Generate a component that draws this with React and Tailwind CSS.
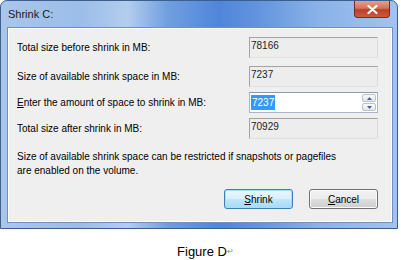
import React from 'react';

const font = { fontFamily: '"Liberation Sans", Arial, sans-serif' };

const ReadOnlyField = ({ value }) => (
  <div className="w-[129px] h-[21px] bg-[#ededed] border border-t-[#a3a3a3] border-l-[#a3a3a3] border-r-[#dadada] border-b-[#e2e2e2] pl-[1px] pt-[2px] text-[10px] leading-[12px] text-[#222]">
    {value}
  </div>
);

const Row = ({ label, children, className = '' }) => (
  <div className={`flex items-center h-[21px] ${className}`}>
    <div className="w-[232px] text-[10px] text-black">{label}</div>
    {children}
  </div>
);

const Arrow = ({ up }) => (
  <svg width="5" height="3" viewBox="0 0 5 3">
    <path d={up ? 'M0 3 L2.5 0 L5 3 Z' : 'M0 0 L2.5 3 L5 0 Z'} fill="#4d6185" />
  </svg>
);

export default function App() {
  return (
    <div className="w-[401px] h-[260px] bg-white relative overflow-hidden" style={font}>
      <div className="w-[398px] h-[229px] rounded-t-[7px] border border-[#3d5f8e] flex flex-col bg-[linear-gradient(90deg,#aac6ea_0%,#9bbde8_20%,#b3cdee_32%,#709fe0_42%,#4f86da_55%,#6394de_65%,#8ab2e8_80%,#a2c3ee_100%)]">
        <div className="h-[26px] flex items-start">
          <div className="pl-[7px] pt-[7px] text-[11px] leading-[12px] text-[#1a1a1a]">Shrink C:</div>
          <div className="ml-auto mr-[7px] w-[36px] h-[17px] rounded-b-[4px] border border-t-0 border-[#7a2a1e] bg-[linear-gradient(180deg,#e3a08e_0%,#d3735b_45%,#bb3f2a_55%,#cc5a40_100%)] flex items-center justify-center">
            <svg width="11" height="9" viewBox="0 0 11 9">
              <path d="M1.5 1 L9.5 8 M9.5 1 L1.5 8" stroke="#fff" strokeWidth="2.2" strokeLinecap="round" />
            </svg>
          </div>
        </div>
        <div className="ml-[6px] mr-[4px] h-[196px] bg-[#efefef] border border-[#6f8fbd] shadow-[inset_1px_1px_0_#fff,inset_-1px_-1px_0_#fff] pl-[9px] pr-[14px] pt-[9px] flex flex-col">
          <Row label="Total size before shrink in MB:">
            <ReadOnlyField value="78166" />
          </Row>
          <Row label="Size of available shrink space in MB:" className="mt-[8px]">
            <ReadOnlyField value="7237" />
          </Row>
          <Row label={<><span className="underline">E</span>nter the amount of space to shrink in MB:</>} className="mt-[5px]">
            <div className="w-[129px] h-[21px] bg-white border border-[#a9b6c6] border-t-[#8e9aab] flex items-center pl-[1px] pr-[1px]">
              <span className="bg-[#3399ff] text-white text-[10px] leading-[15px] px-[1px]">7237</span>
              <div className="ml-auto flex flex-col gap-[1px]">
                <div className="w-[14px] h-[8px] rounded-[2px] border border-[#b9c2cc] bg-[linear-gradient(180deg,#fbfbfb,#e3e6ea)] flex items-center justify-center">
                  <Arrow up />
                </div>
                <div className="w-[14px] h-[8px] rounded-[2px] border border-[#b9c2cc] bg-[linear-gradient(180deg,#fbfbfb,#e3e6ea)] flex items-center justify-center">
                  <Arrow />
                </div>
              </div>
            </div>
          </Row>
          <Row label="Total size after shrink in MB:" className="mt-[5px]">
            <ReadOnlyField value="70929" />
          </Row>
          <div className="mt-[11px] text-[10px] leading-[14px] text-black">
            Size of available shrink space can be restricted if snapshots or pagefiles<br />
            are enabled on the volume.
          </div>
          <div className="mt-[11px] flex justify-end gap-[16px]">
            <div className="w-[69px] h-[20px] rounded-[3px] border border-[#3c7fb1] shadow-[inset_0_0_0_1px_#a6e0f8] bg-[linear-gradient(180deg,#eaf6fd_0%,#d9f0fc_48%,#bee6fd_52%,#a7d9f5_100%)] flex items-center justify-center text-[10px] text-black">
              <span><span className="underline">S</span>hrink</span>
            </div>
            <div className="w-[69px] h-[20px] rounded-[3px] border border-[#707070] shadow-[inset_0_0_0_1px_#fbfbfb] bg-[linear-gradient(180deg,#f2f2f2_0%,#ebebeb_48%,#dddddd_52%,#cfcfcf_100%)] flex items-center justify-center text-[10px] text-black">
              <span><span className="underline">C</span>ancel</span>
            </div>
          </div>
        </div>
      </div>
      <div className="flex justify-center pt-[15px] pl-[10px]">
        <span className="text-[13px] leading-[15px] text-black">Figure D</span>
        <span className="text-[8px] leading-[15px] text-[#888] self-end">↵</span>
      </div>
    </div>
  );
}
